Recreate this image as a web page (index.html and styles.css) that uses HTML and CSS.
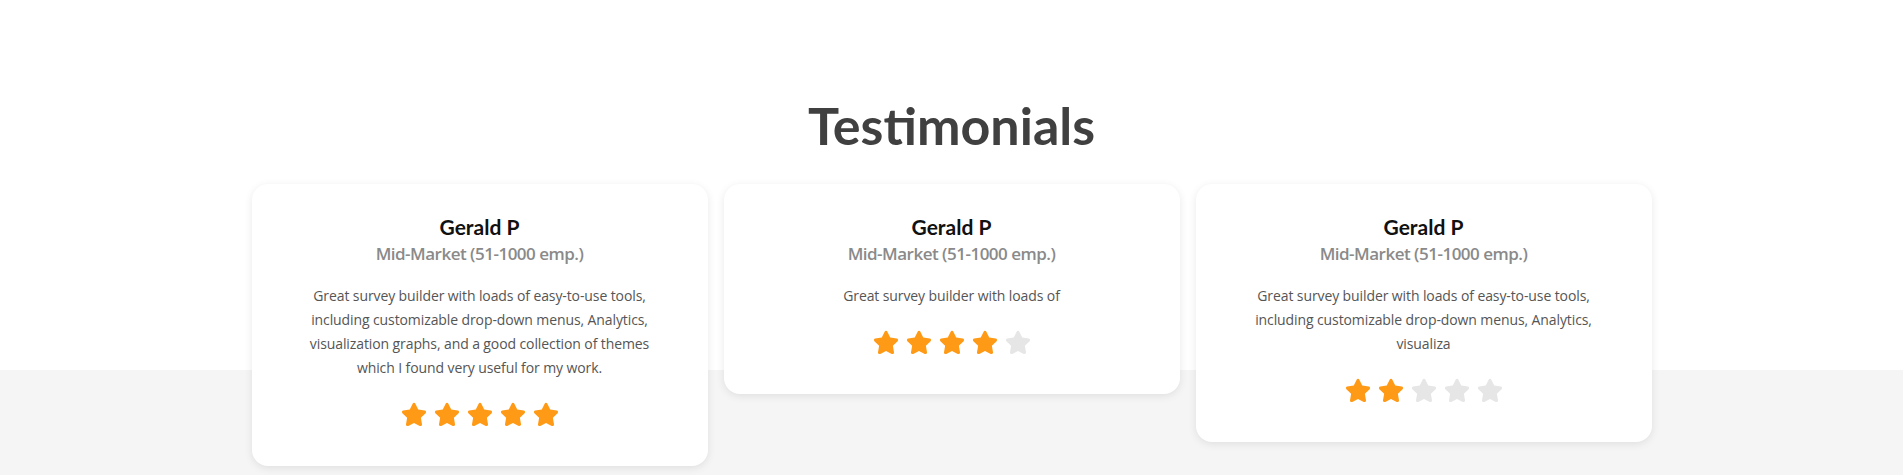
FILE: index.html
```html
<!DOCTYPE html>
<html lang="en">
<head>
<meta charset="utf-8">
<title>Testimonials</title>
<link rel="stylesheet" href="styles.css">
</head>
<body>
<section class="testimonials">
  <h2 class="title">Testimonials</h2>
  <div class="cards">
    <article class="card">
      <h3 class="name">Gerald P</h3>
      <p class="role">Mid-Market (51-1000 emp.)</p>
      <p class="quote">Great survey builder with loads of easy-to-use tools, including customizable drop-down menus, Analytics, visualization graphs, and a good collection of themes which I found very useful for my work.</p>
      <div class="stars">
        <svg class="star on" viewBox="0 0 24 24"><path d="M12 2.2c.5 0 .9.3 1.1.7l2.3 4.7 5.2.8c1 .1 1.4 1.4.7 2.1l-3.8 3.7.9 5.2c.2 1-.9 1.7-1.8 1.3L12 18.3l-4.6 2.4c-.9.5-2-.3-1.8-1.3l.9-5.2-3.8-3.7c-.7-.7-.3-2 .7-2.1l5.2-.8 2.3-4.7c.2-.4.6-.7 1.1-.7z"/></svg>
        <svg class="star on" viewBox="0 0 24 24"><path d="M12 2.2c.5 0 .9.3 1.1.7l2.3 4.7 5.2.8c1 .1 1.4 1.4.7 2.1l-3.8 3.7.9 5.2c.2 1-.9 1.7-1.8 1.3L12 18.3l-4.6 2.4c-.9.5-2-.3-1.8-1.3l.9-5.2-3.8-3.7c-.7-.7-.3-2 .7-2.1l5.2-.8 2.3-4.7c.2-.4.6-.7 1.1-.7z"/></svg>
        <svg class="star on" viewBox="0 0 24 24"><path d="M12 2.2c.5 0 .9.3 1.1.7l2.3 4.7 5.2.8c1 .1 1.4 1.4.7 2.1l-3.8 3.7.9 5.2c.2 1-.9 1.7-1.8 1.3L12 18.3l-4.6 2.4c-.9.5-2-.3-1.8-1.3l.9-5.2-3.8-3.7c-.7-.7-.3-2 .7-2.1l5.2-.8 2.3-4.7c.2-.4.6-.7 1.1-.7z"/></svg>
        <svg class="star on" viewBox="0 0 24 24"><path d="M12 2.2c.5 0 .9.3 1.1.7l2.3 4.7 5.2.8c1 .1 1.4 1.4.7 2.1l-3.8 3.7.9 5.2c.2 1-.9 1.7-1.8 1.3L12 18.3l-4.6 2.4c-.9.5-2-.3-1.8-1.3l.9-5.2-3.8-3.7c-.7-.7-.3-2 .7-2.1l5.2-.8 2.3-4.7c.2-.4.6-.7 1.1-.7z"/></svg>
        <svg class="star on" viewBox="0 0 24 24"><path d="M12 2.2c.5 0 .9.3 1.1.7l2.3 4.7 5.2.8c1 .1 1.4 1.4.7 2.1l-3.8 3.7.9 5.2c.2 1-.9 1.7-1.8 1.3L12 18.3l-4.6 2.4c-.9.5-2-.3-1.8-1.3l.9-5.2-3.8-3.7c-.7-.7-.3-2 .7-2.1l5.2-.8 2.3-4.7c.2-.4.6-.7 1.1-.7z"/></svg>
      </div>
    </article>
    <article class="card">
      <h3 class="name">Gerald P</h3>
      <p class="role">Mid-Market (51-1000 emp.)</p>
      <p class="quote">Great survey builder with loads of</p>
      <div class="stars">
        <svg class="star on" viewBox="0 0 24 24"><path d="M12 2.2c.5 0 .9.3 1.1.7l2.3 4.7 5.2.8c1 .1 1.4 1.4.7 2.1l-3.8 3.7.9 5.2c.2 1-.9 1.7-1.8 1.3L12 18.3l-4.6 2.4c-.9.5-2-.3-1.8-1.3l.9-5.2-3.8-3.7c-.7-.7-.3-2 .7-2.1l5.2-.8 2.3-4.7c.2-.4.6-.7 1.1-.7z"/></svg>
        <svg class="star on" viewBox="0 0 24 24"><path d="M12 2.2c.5 0 .9.3 1.1.7l2.3 4.7 5.2.8c1 .1 1.4 1.4.7 2.1l-3.8 3.7.9 5.2c.2 1-.9 1.7-1.8 1.3L12 18.3l-4.6 2.4c-.9.5-2-.3-1.8-1.3l.9-5.2-3.8-3.7c-.7-.7-.3-2 .7-2.1l5.2-.8 2.3-4.7c.2-.4.6-.7 1.1-.7z"/></svg>
        <svg class="star on" viewBox="0 0 24 24"><path d="M12 2.2c.5 0 .9.3 1.1.7l2.3 4.7 5.2.8c1 .1 1.4 1.4.7 2.1l-3.8 3.7.9 5.2c.2 1-.9 1.7-1.8 1.3L12 18.3l-4.6 2.4c-.9.5-2-.3-1.8-1.3l.9-5.2-3.8-3.7c-.7-.7-.3-2 .7-2.1l5.2-.8 2.3-4.7c.2-.4.6-.7 1.1-.7z"/></svg>
        <svg class="star on" viewBox="0 0 24 24"><path d="M12 2.2c.5 0 .9.3 1.1.7l2.3 4.7 5.2.8c1 .1 1.4 1.4.7 2.1l-3.8 3.7.9 5.2c.2 1-.9 1.7-1.8 1.3L12 18.3l-4.6 2.4c-.9.5-2-.3-1.8-1.3l.9-5.2-3.8-3.7c-.7-.7-.3-2 .7-2.1l5.2-.8 2.3-4.7c.2-.4.6-.7 1.1-.7z"/></svg>
        <svg class="star" viewBox="0 0 24 24"><path d="M12 2.2c.5 0 .9.3 1.1.7l2.3 4.7 5.2.8c1 .1 1.4 1.4.7 2.1l-3.8 3.7.9 5.2c.2 1-.9 1.7-1.8 1.3L12 18.3l-4.6 2.4c-.9.5-2-.3-1.8-1.3l.9-5.2-3.8-3.7c-.7-.7-.3-2 .7-2.1l5.2-.8 2.3-4.7c.2-.4.6-.7 1.1-.7z"/></svg>
      </div>
    </article>
    <article class="card">
      <h3 class="name">Gerald P</h3>
      <p class="role">Mid-Market (51-1000 emp.)</p>
      <p class="quote">Great survey builder with loads of easy-to-use tools, including customizable drop-down menus, Analytics, visualiza</p>
      <div class="stars">
        <svg class="star on" viewBox="0 0 24 24"><path d="M12 2.2c.5 0 .9.3 1.1.7l2.3 4.7 5.2.8c1 .1 1.4 1.4.7 2.1l-3.8 3.7.9 5.2c.2 1-.9 1.7-1.8 1.3L12 18.3l-4.6 2.4c-.9.5-2-.3-1.8-1.3l.9-5.2-3.8-3.7c-.7-.7-.3-2 .7-2.1l5.2-.8 2.3-4.7c.2-.4.6-.7 1.1-.7z"/></svg>
        <svg class="star on" viewBox="0 0 24 24"><path d="M12 2.2c.5 0 .9.3 1.1.7l2.3 4.7 5.2.8c1 .1 1.4 1.4.7 2.1l-3.8 3.7.9 5.2c.2 1-.9 1.7-1.8 1.3L12 18.3l-4.6 2.4c-.9.5-2-.3-1.8-1.3l.9-5.2-3.8-3.7c-.7-.7-.3-2 .7-2.1l5.2-.8 2.3-4.7c.2-.4.6-.7 1.1-.7z"/></svg>
        <svg class="star" viewBox="0 0 24 24"><path d="M12 2.2c.5 0 .9.3 1.1.7l2.3 4.7 5.2.8c1 .1 1.4 1.4.7 2.1l-3.8 3.7.9 5.2c.2 1-.9 1.7-1.8 1.3L12 18.3l-4.6 2.4c-.9.5-2-.3-1.8-1.3l.9-5.2-3.8-3.7c-.7-.7-.3-2 .7-2.1l5.2-.8 2.3-4.7c.2-.4.6-.7 1.1-.7z"/></svg>
        <svg class="star" viewBox="0 0 24 24"><path d="M12 2.2c.5 0 .9.3 1.1.7l2.3 4.7 5.2.8c1 .1 1.4 1.4.7 2.1l-3.8 3.7.9 5.2c.2 1-.9 1.7-1.8 1.3L12 18.3l-4.6 2.4c-.9.5-2-.3-1.8-1.3l.9-5.2-3.8-3.7c-.7-.7-.3-2 .7-2.1l5.2-.8 2.3-4.7c.2-.4.6-.7 1.1-.7z"/></svg>
        <svg class="star" viewBox="0 0 24 24"><path d="M12 2.2c.5 0 .9.3 1.1.7l2.3 4.7 5.2.8c1 .1 1.4 1.4.7 2.1l-3.8 3.7.9 5.2c.2 1-.9 1.7-1.8 1.3L12 18.3l-4.6 2.4c-.9.5-2-.3-1.8-1.3l.9-5.2-3.8-3.7c-.7-.7-.3-2 .7-2.1l5.2-.8 2.3-4.7c.2-.4.6-.7 1.1-.7z"/></svg>
      </div>
    </article>
  </div>
</section>
</body>
</html>
```

FILE: styles.css
```css
* { box-sizing: border-box; }

html, body {
  margin: 0;
  padding: 0;
}

body {
  font-family: "Open Sans", "Liberation Sans", sans-serif;
  background: #f5f5f5;
}

.testimonials {
  background: linear-gradient(to bottom, #ffffff 0, #ffffff 370px, #f5f5f5 370px, #f5f5f5 100%);
  padding: 92px 0 9px;
  min-height: 475px;
}

.title {
  margin: 0 0 26px;
  text-align: center;
  font-family: "Lato", "Open Sans", sans-serif;
  font-weight: 700;
  font-size: 52px;
  line-height: 66px;
  color: #404040;
  letter-spacing: 0;
}

.cards {
  width: 1400px;
  margin: 0 auto;
  display: flex;
  gap: 16px;
  align-items: flex-start;
}

.card {
  flex: 0 0 456px;
  background: #ffffff;
  border-radius: 16px;
  box-shadow: 0 2px 8px rgba(0, 0, 0, 0.09);
  padding: 30px 50px 36px;
  text-align: center;
}

.name {
  margin: 0;
  font-family: "Lato", "Open Sans", sans-serif;
  font-weight: 700;
  font-size: 21px;
  line-height: 26px;
  color: #111111;
}

.role {
  margin: 2px 0 0;
  font-weight: 600;
  font-size: 17px;
  letter-spacing: -0.5px;
  line-height: 24px;
  color: #8a8a8a;
}

.quote {
  margin: 18px 0 0;
  font-size: 14px;
  letter-spacing: -0.1px;
  line-height: 24px;
  color: #555555;
}

.stars {
  margin-top: 20px;
  display: flex;
  justify-content: center;
  gap: 3px;
}

.star {
  width: 30px;
  height: 30px;
  fill: #e6e6e6;
}

.star.on {
  fill: #ff9a17;
}
```
